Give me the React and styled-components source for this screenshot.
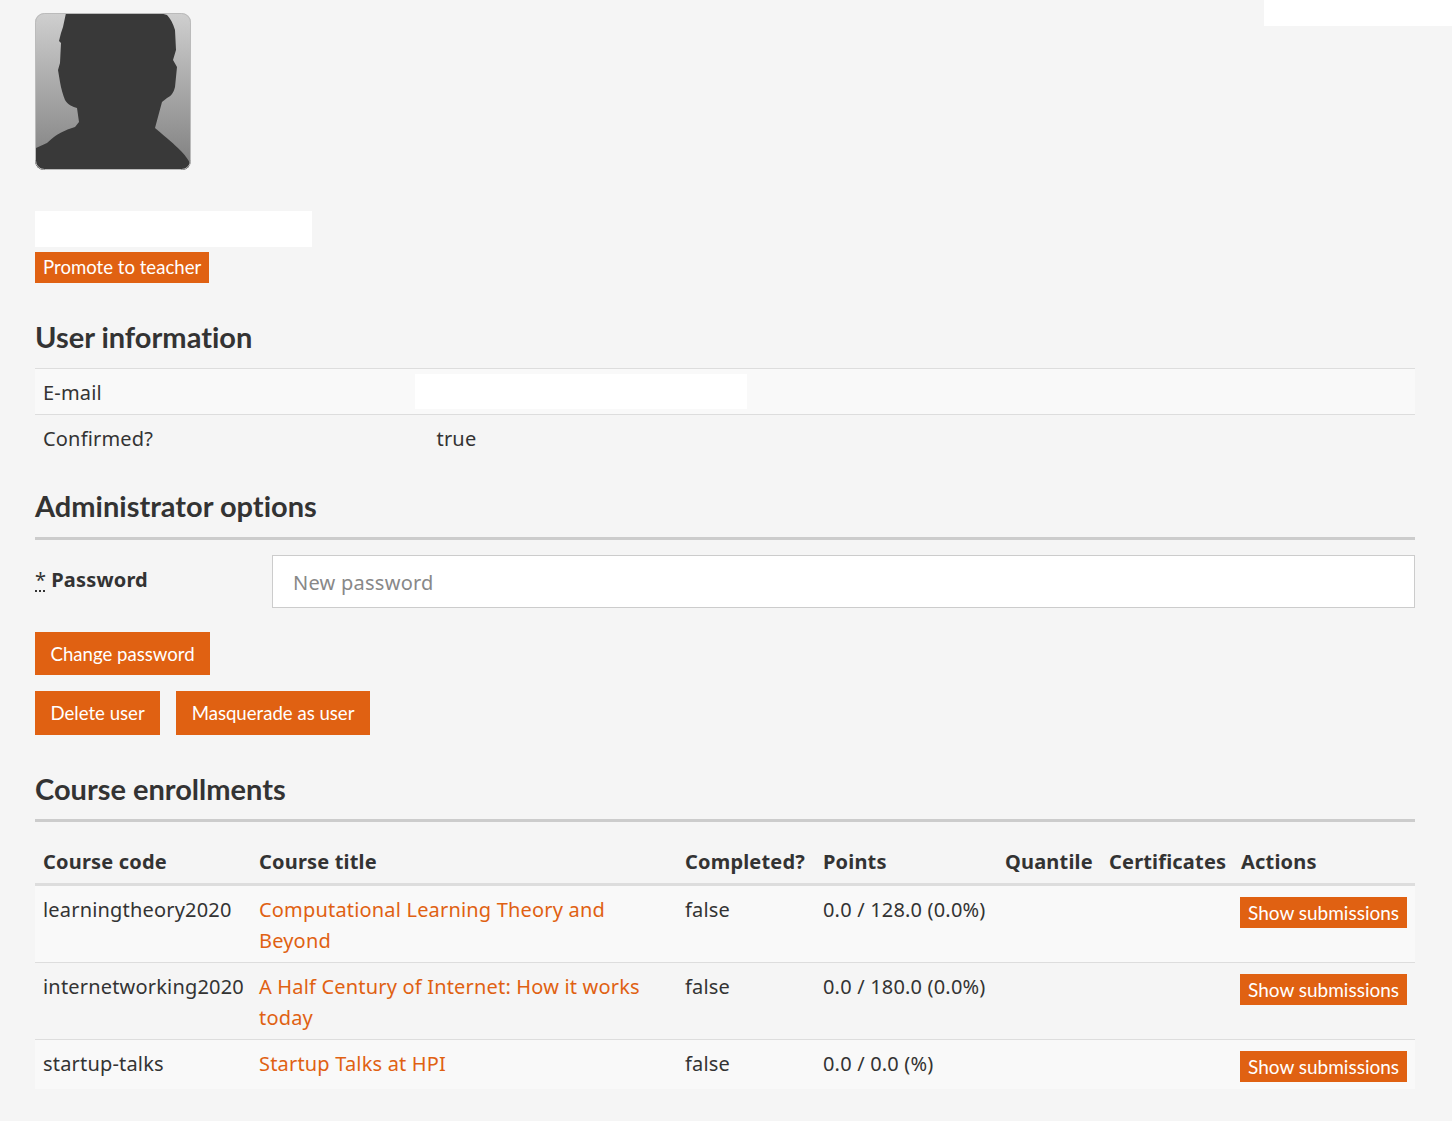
import React from "react";
import styled, { createGlobalStyle } from "styled-components";

const GlobalStyle = createGlobalStyle`
  html, body {
    margin: 0;
    padding: 0;
    background: #f5f5f5;
  }

  body {
    color: #333;
    font-family: "Noto Sans", "Open Sans", sans-serif;
    font-size: 20px;
    line-height: 31px;
    letter-spacing: 0.18px;
  }

  * {
    box-sizing: border-box;
  }
`;

const Page = styled.main`
  position: relative;
  height: 1121px;
  padding: 13px 37px 0 35px;
  overflow: hidden;
`;

const CornerMask = styled.div`
  position: absolute;
  top: 0;
  right: 0;
  width: 188px;
  height: 26px;
  background: #fff;
`;

const Avatar = styled.svg`
  display: block;
  width: 156px;
  height: 157px;
`;

const NameMask = styled.div`
  width: 277px;
  height: 36px;
  margin-top: 41px;
  background: #fff;
`;

const Button = styled.button`
  display: block;
  flex: none;
  border: 0;
  margin: 0;
  padding: ${(p) => (p.$large ? "2px 15.5px 0" : "0 8px")};
  height: ${(p) => p.$height || 31}px;
  border-radius: 0;
  background: #e06112;
  color: #fff;
  font-family: "Lato", "Noto Sans", sans-serif;
  font-size: 18.6px;
  font-variant-ligatures: none;
  line-height: 1;
  letter-spacing: 0;
  white-space: nowrap;
`;

const ShowButton = styled(Button)`
  font-size: 19px;
`;

const PromoteRow = styled.div`
  margin-top: 5px;
`;

const Heading = styled.h2`
  margin: ${(p) => p.$top}px 0 0;
  height: ${(p) => p.$height}px;
  color: #333;
  font-family: "Lato", "Noto Sans", sans-serif;
  font-size: 29px;
  font-weight: 700;
  font-variant-ligatures: none;
  line-height: ${(p) => p.$line}px;
  letter-spacing: 0;
  border-bottom: ${(p) => (p.$rule ? "3px solid #ccc" : "0")};
`;

const InfoTable = styled.table`
  width: 100%;
  border-collapse: collapse;
  table-layout: fixed;
  margin-top: 10px;
`;

const InfoRow = styled.tr`
  background: ${(p) => (p.$odd ? "#f9f9f9" : "transparent")};
  border-top: 1px solid #ddd;
`;

const InfoLabel = styled.td`
  width: 379px;
  height: 46px;
  padding: 2px 8px 0;
  vertical-align: middle;
`;

const InfoValue = styled.td`
  height: 46px;
  padding: 2px 0 0 22.5px;
  vertical-align: middle;
`;

const EmailMask = styled.div`
  width: 332px;
  height: 35px;
  margin: -3px 0 0 -22px;
  background: #fff;
`;

const PasswordRow = styled.div`
  display: flex;
  align-items: flex-start;
  margin-top: 15px;
`;

const PasswordLabel = styled.label`
  display: flex;
  width: 237px;
  padding-top: 9px;
  font-weight: 700;
`;

const Required = styled.abbr`
  margin-right: 5px;
  font-weight: 400;
  text-decoration: underline dotted;
  text-underline-offset: 4px;
  cursor: help;
`;

const PasswordInput = styled.input`
  flex: 1;
  height: 53px;
  padding: 2px 20px 0;
  border: 1px solid #ccc;
  border-radius: 0;
  background: #fff;
  color: #333;
  font-family: "Noto Sans", "Open Sans", sans-serif;
  font-size: 20px;
  letter-spacing: 0.25px;

  &::placeholder {
    color: #888;
    opacity: 1;
  }
`;

const ButtonRow = styled.div`
  display: flex;
  gap: 16px;
  margin-top: ${(p) => p.$top}px;
`;

const EnrollTable = styled.table`
  width: 100%;
  border-collapse: collapse;
  table-layout: fixed;
  margin-top: 24px;
`;

const HeadCell = styled.th`
  width: ${(p) => p.$width}px;
  height: 38px;
  padding: 0 8px 6px;
  border-bottom: 3px solid #ddd;
  font-weight: 700;
  text-align: left;
  vertical-align: middle;
  white-space: nowrap;
`;

const CourseRow = styled.tr`
  background: ${(p) => (p.$odd ? "#f9f9f9" : "transparent")};
  border-top: 1px solid #ddd;
`;

const Cell = styled.td`
  padding: 8px 8px 6px;
  vertical-align: top;
  white-space: ${(p) => (p.$nowrap ? "nowrap" : "normal")};
`;

const ActionCell = styled(Cell)`
  padding: 11px 8px 7px 7px;
`;

const CourseLink = styled.a`
  color: #e06112;
  text-decoration: none;
`;

const columns = [
  { title: "Course code", width: 216 },
  { title: "Course title", width: 426 },
  { title: "Completed?", width: 138 },
  { title: "Points", width: 182 },
  { title: "Quantile", width: 104 },
  { title: "Certificates", width: 132 },
  { title: "Actions", width: 182 },
];

const courses = [
  {
    code: "learningtheory2020",
    title: "Computational Learning Theory and Beyond",
    points: "0.0 / 128.0 (0.0%)",
  },
  {
    code: "internetworking2020",
    title: "A Half Century of Internet: How it works today",
    points: "0.0 / 180.0 (0.0%)",
  },
  {
    code: "startup-talks",
    title: "Startup Talks at HPI",
    points: "0.0 / 0.0 (%)",
  },
];

function Silhouette() {
  return (
    <Avatar viewBox="0 0 156 157" aria-label="Profile picture">
      <defs>
        <linearGradient id="avatarFade" x1="0" y1="0" x2="0" y2="1">
          <stop offset="0" stopColor="#cfcfcf" />
          <stop offset="1" stopColor="#7f7f7f" />
        </linearGradient>
        <clipPath id="avatarCorners">
          <rect width="156" height="157" rx="9" />
        </clipPath>
      </defs>
      <g clipPath="url(#avatarCorners)">
        <rect width="156" height="157" fill="url(#avatarFade)" />
        <path
          fill="#393939"
          d="M31 0 L28 14 L26 20 L24 28 L26 30 L25 50 L23 57 L25 69 C26 75 28 82 30 87 C33 92 38 94 42 95 L44 109 L40 114 C32 117 25 118 12 130 L1 135 L0 157 L153 157 L155 150 C150 141 145 136 120 115 L127 89 L132 85 C137 83 139 78 140 74 L142 54 L138 47 L141 37 L140 17 C138 10 135 5 132 2 L125 0 Z"
        />
      </g>
      <rect x="0.5" y="0.5" width="155" height="156" rx="9" fill="none" stroke="#bbb" />
    </Avatar>
  );
}

function App() {
  return (
    <Page>
      <GlobalStyle />
      <CornerMask />
      <Silhouette />
      <NameMask />
      <PromoteRow>
        <Button>Promote to teacher</Button>
      </PromoteRow>

      <Heading $top={35} $height={40} $line={38}>
        User information
      </Heading>
      <InfoTable>
        <tbody>
          <InfoRow $odd>
            <InfoLabel>E-mail</InfoLabel>
            <InfoValue>
              <EmailMask />
            </InfoValue>
          </InfoRow>
          <InfoRow>
            <InfoLabel>Confirmed?</InfoLabel>
            <InfoValue>true</InfoValue>
          </InfoRow>
        </tbody>
      </InfoTable>

      <Heading $top={24} $height={55} $line={42} $rule>
        Administrator options
      </Heading>
      <PasswordRow>
        <PasswordLabel>
          <Required title="required">*</Required>
          Password
        </PasswordLabel>
        <PasswordInput type="password" placeholder="New password" />
      </PasswordRow>
      <ButtonRow $top={24}>
        <Button $large $height={43}>
          Change password
        </Button>
      </ButtonRow>
      <ButtonRow $top={16}>
        <Button $large $height={44}>
          Delete user
        </Button>
        <Button $large $height={44}>
          Masquerade as user
        </Button>
      </ButtonRow>

      <Heading $top={35} $height={52} $line={38} $rule>
        Course enrollments
      </Heading>
      <EnrollTable>
        <thead>
          <tr>
            {columns.map((col) => (
              <HeadCell key={col.title} $width={col.width}>
                {col.title}
              </HeadCell>
            ))}
          </tr>
        </thead>
        <tbody>
          {courses.map((course, i) => (
            <CourseRow key={course.code} $odd={i % 2 === 0}>
              <Cell $nowrap>{course.code}</Cell>
              <Cell>
                <CourseLink href="#">{course.title}</CourseLink>
              </Cell>
              <Cell>false</Cell>
              <Cell $nowrap>{course.points}</Cell>
              <Cell />
              <Cell />
              <ActionCell>
                <ShowButton>Show submissions</ShowButton>
              </ActionCell>
            </CourseRow>
          ))}
        </tbody>
      </EnrollTable>
    </Page>
  );
}

export default App;
